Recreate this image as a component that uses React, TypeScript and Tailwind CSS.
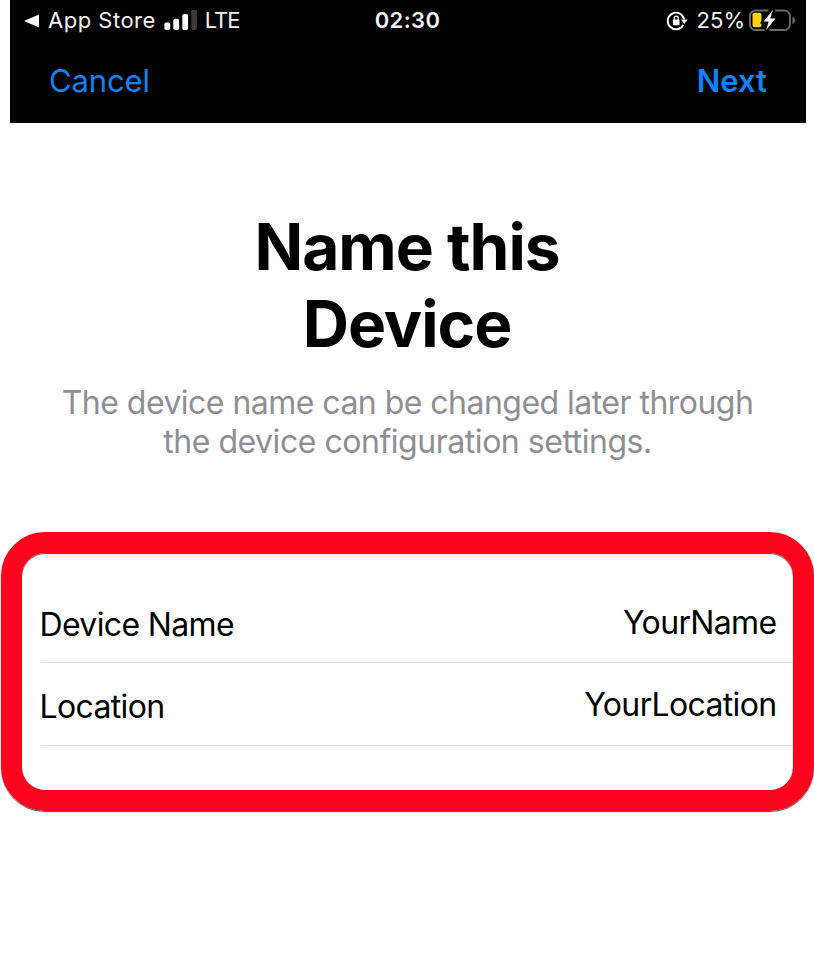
import React from "react";

function SignalBars() {
  return (
    <svg width="34" height="22" viewBox="0 0 34 22" className="shrink-0">
      <rect x="0.4" y="12.600" width="5.800" height="7.400" rx="1.8" fill="#fff" />
      <rect x="9.300" y="8.700" width="5.800" height="11.300" rx="1.8" fill="#fff" />
      <rect x="18.300" y="4" width="5.800" height="16" rx="1.8" fill="#fff" />
      <rect x="27.300" y="-0.500" width="5.600" height="20.500" rx="1.8" fill="#3a3a3a" />
    </svg>
  );
}

function RotationLock() {
  return (
    <svg width="22" height="20" viewBox="0 0 22 20" className="shrink-0">
      <path d="M17.300 14 A8.300 8.300 0 1 1 18.200 8.400" fill="none" stroke="#fff" strokeWidth="1.9" />
      <path d="M15 8.400 H21.800 L18.400 13 Z" fill="#fff" />
      <rect x="6.900" y="8.600" width="6.600" height="5.600" rx="0.8" fill="#fff" />
      <path d="M8.200 9 V7.200 a2 2 0 0 1 4 0 V9" fill="none" stroke="#fff" strokeWidth="1.3" />
    </svg>
  );
}

function Battery() {
  return (
    <svg width="48" height="24" viewBox="0 0 48 24" className="shrink-0">
      <path d="M19.500 1.500 H6.500 a5.500 5.500 0 0 0 -5.500 5.500 V15.500 a5.500 5.500 0 0 0 5.500 5.500 H15.500" fill="none" stroke="#6b6b6e" strokeWidth="1.9" />
      <path d="M26 1.500 H35.500 a5.500 5.500 0 0 1 5.500 5.500 V15.500 a5.500 5.500 0 0 1 -5.500 5.500 H20.500" fill="none" stroke="#6b6b6e" strokeWidth="1.9" />
      <path d="M43.500 7.500 Q46.200 8.500 46.200 11.200 Q46.200 14 43.500 15 Z" fill="#6b6b6e" />
      <path d="M6 3.800 H10.500 a2 2 0 0 1 2 2 V11.500 L11 14.500 H12.500 V16.200 a2 2 0 0 1 -2 2 H6 a2.500 2.500 0 0 1 -2.500 -2.500 V6.300 a2.500 2.500 0 0 1 2.500 -2.500 Z" fill="#fdd60a" />
      <path d="M24 0.800 L14.600 12.400 H19.800 L17 21.200 L26.500 9.600 H21.200 Z" fill="#fff" />
    </svg>
  );
}

function StatusBar() {
  return (
    <div className="grid h-[41px] grid-cols-[1fr_auto_1fr] items-center text-[22px] leading-[41px] text-[#f2f2f2]">
      <div className="flex items-center pl-[14px]">
        <svg width="16" height="14" viewBox="0 0 16 14" className="shrink-0">
          <path d="M15 0.500 V13.500 L1.200 7.600 Q0 7 1.200 6.400 Z" fill="#fff" />
        </svg>
        <span className="ml-[8px] tracking-[0.5px]">App Store</span>
        <span className="ml-[8px] flex">
          <SignalBars />
        </span>
        <span className="ml-[7px] tracking-[-1.1px]">LTE</span>
      </div>
      <div className="mr-px font-semibold tracking-[0.4px]">02:30</div>
      <div className="flex items-center justify-end pr-[9px]">
        <RotationLock />
        <span className="ml-[9px]">25%</span>
        <span className="ml-[4px] flex">
          <Battery />
        </span>
      </div>
    </div>
  );
}

function FieldRow({ label, value }: { label: string; value: string }) {
  return (
    <div className="ml-[18.5px] flex h-[82.5px] items-center justify-between border-b-[1.5px] border-[#dedee0] pr-[16.5px] text-[32px] tracking-[-0.65px] text-black">
      <span className="-ml-px pt-[7px]">{label}</span>
      <span className="pt-[3px]">{value}</span>
    </div>
  );
}

export default function App() {
  return (
    <div className="h-[966px] w-[814px] overflow-hidden bg-white font-['Inter',sans-serif] whitespace-nowrap">
      <header className="mr-[8px] ml-[10px] h-[123px] bg-black">
        <StatusBar />
        <nav className="flex h-[81px] items-center justify-between pr-[39px] pl-[39px] text-[31px]">
          <span className="tracking-[-0.15px] text-[#0f83f5]">Cancel</span>
          <span className="font-semibold text-[#0a84ff]">Next</span>
        </nav>
      </header>
      <main>
        <h1 className="mt-[85px] text-center text-[64px] leading-[77px] font-bold tracking-[-1px] text-black">
          Name this
          <br />
          Device
        </h1>
        <p className="mt-[22px] pl-[1px] text-center text-[32px] leading-[38.5px] tracking-[-0.53px] text-[#8e8e93]">
          The device name can be changed later through
          <br />
          <span className="tracking-[-0.46px]">the device configuration settings.</span>
        </p>
        <section className="mt-[71px] ml-px h-[279px] w-[813px] rounded-[44px] border-[21.5px] border-[#fb041c] pt-[27.5px] shadow-[0_1px_1px_rgba(0,0,0,0.7),inset_0_1px_1px_rgba(0,0,0,0.7)]">
          <FieldRow label="Device Name" value="YourName" />
          <FieldRow label="Location" value="YourLocation" />
        </section>
      </main>
    </div>
  );
}
